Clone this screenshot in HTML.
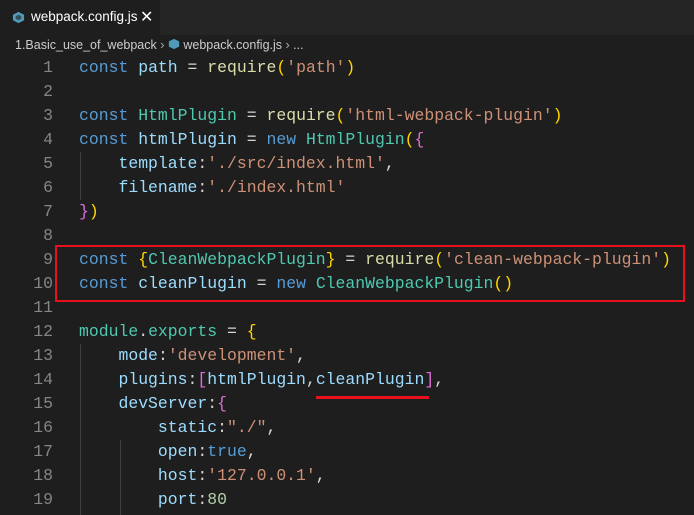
<!DOCTYPE html>
<html><head><meta charset="utf-8"><style>
body{margin:0;width:694px;height:515px;background:#1e1e1e;overflow:hidden;position:relative;font-family:"Liberation Sans",sans-serif}
.tabbar{position:absolute;left:0;top:0;width:694px;height:35px;background:#252526}
.tab{position:absolute;left:0;top:0;width:160px;height:35px;background:#1e1e1e;color:#fff;font-size:13.5px}
.crumb{position:absolute;left:15px;top:38px;color:#cccccc;font-size:12.5px}
.code{position:absolute;left:0;top:56px;font-family:"Liberation Mono",monospace;font-size:16.45px}
.l{height:24px;line-height:24px;white-space:pre;position:relative}
.n{display:inline-block;width:53px;text-align:right;color:#858585;margin-right:26px}
.k{color:#569cd6}.v{color:#9cdcfe}.f{color:#dcdcaa}.s{color:#ce9178}.c{color:#4ec9b0}.g{color:#ffd700}.p{color:#da70d6}.b{color:#179fff}.w{color:#d4d4d4}
.guide{position:absolute;width:1px;background:#404040}
</style></head><body>
<div class="tabbar"><div class="tab">
<svg style="position:absolute;left:12px;top:11px" width="13" height="13" viewBox="0 0 14 14"><path d="M7 1L13 4V10L7 13L1 10V4Z" fill="#519aba"/><path d="M7 4L10 5.5V8.5L7 10L4 8.5V5.5Z" fill="#1e1e1e" opacity=".6"/></svg>
<span style="position:absolute;left:31px;top:9px">webpack.config.js</span>
<span style="position:absolute;left:140px;top:7px;font-size:16px">✕</span></div></div>
<div class="crumb">1.Basic_use_of_webpack <span style="color:#aaa">›</span> <svg width="12" height="12" viewBox="0 0 14 14" style="vertical-align:-1px"><path d="M7 1L13 4V10L7 13L1 10V4Z" fill="#519aba"/></svg> webpack.config.js <span style="color:#aaa">›</span> ...</div>
<div class="guide" style="left:80px;top:152px;height:48px"></div>
<div class="guide" style="left:80px;top:344px;height:171px"></div>
<div class="guide" style="left:120px;top:440px;height:75px"></div>
<div class="code">
<div class="l"><span class="n">1</span><span class="k">const</span> <span class="v">path</span> <span class="w">=</span> <span class="f">require</span><span class="g">(</span><span class="s">'path'</span><span class="g">)</span></div>
<div class="l"><span class="n">2</span></div>
<div class="l"><span class="n">3</span><span class="k">const</span> <span class="c">HtmlPlugin</span> <span class="w">=</span> <span class="f">require</span><span class="g">(</span><span class="s">'html-webpack-plugin'</span><span class="g">)</span></div>
<div class="l"><span class="n">4</span><span class="k">const</span> <span class="v">htmlPlugin</span> <span class="w">=</span> <span class="k">new</span> <span class="c">HtmlPlugin</span><span class="g">(</span><span class="p">{</span></div>
<div class="l"><span class="n">5</span>    <span class="v">template</span><span class="w">:</span><span class="s">'./src/index.html'</span><span class="w">,</span></div>
<div class="l"><span class="n">6</span>    <span class="v">filename</span><span class="w">:</span><span class="s">'./index.html'</span></div>
<div class="l"><span class="n">7</span><span class="p">}</span><span class="g">)</span></div>
<div class="l"><span class="n">8</span></div>
<div class="l"><span class="n">9</span><span class="k">const</span> <span class="g">{</span><span class="c">CleanWebpackPlugin</span><span class="g">}</span> <span class="w">=</span> <span class="f">require</span><span class="g">(</span><span class="s">'clean-webpack-plugin'</span><span class="g">)</span></div>
<div class="l"><span class="n">10</span><span class="k">const</span> <span class="v">cleanPlugin</span> <span class="w">=</span> <span class="k">new</span> <span class="c">CleanWebpackPlugin</span><span class="g">()</span></div>
<div class="l"><span class="n">11</span></div>
<div class="l"><span class="n">12</span><span class="c">module</span><span class="w">.</span><span class="c">exports</span> <span class="w">=</span> <span class="g">{</span></div>
<div class="l"><span class="n">13</span>    <span class="v">mode</span><span class="w">:</span><span class="s">'development'</span><span class="w">,</span></div>
<div class="l"><span class="n">14</span>    <span class="v">plugins</span><span class="w">:</span><span class="p">[</span><span class="v">htmlPlugin</span><span class="w">,</span><span class="v">cleanPlugin</span><span class="p">]</span><span class="w">,</span></div>
<div class="l"><span class="n">15</span>    <span class="v">devServer</span><span class="w">:</span><span class="p">{</span></div>
<div class="l"><span class="n">16</span>        <span class="v">static</span><span class="w">:</span><span class="s">"./"</span><span class="w">,</span></div>
<div class="l"><span class="n">17</span>        <span class="v">open</span><span class="w">:</span><span class="k">true</span><span class="w">,</span></div>
<div class="l"><span class="n">18</span>        <span class="v">host</span><span class="w">:</span><span class="s">'127.0.0.1'</span><span class="w">,</span></div>
<div class="l"><span class="n">19</span>        <span class="v">port</span><span class="w">:</span><span class="c" style="color:#b5cea8">80</span></div>
</div>
<div style="position:absolute;left:55px;top:245px;width:626px;height:53px;border:2px solid #e8101c"></div>
<div style="position:absolute;left:316px;top:396px;width:113px;height:3px;background:#e8101c"></div>
</body></html>
